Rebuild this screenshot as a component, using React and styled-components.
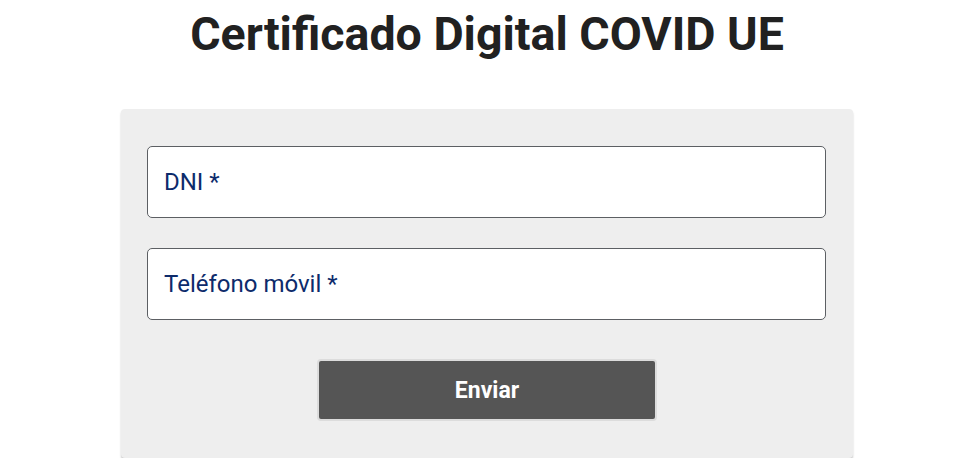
import React from "react";
import styled, { createGlobalStyle } from "styled-components";

const Global = createGlobalStyle`
  html, body { margin: 0; padding: 0; background: #fff; }
  body { font-family: Roboto, "Liberation Sans", sans-serif; }
`;

const Page = styled.div`
  width: 980px;
  display: flex;
  flex-direction: column;
  align-items: center;
  padding-right: 6px;
  box-sizing: border-box;
`;

const Title = styled.h1`
  margin: 7px 0 0;
  font-size: 46.5px;
  line-height: 54px;
  font-weight: 700;
  color: #212121;
`;

const Card = styled.form`
  margin-top: 48px;
  width: 732px;
  box-sizing: border-box;
  background: #eeeeee;
  border-radius: 4px;
  box-shadow: 0 2px 2px rgba(0, 0, 0, 0.22);
  padding: 37px 27px 37px 26px;
  display: flex;
  flex-direction: column;
  gap: 30px;
`;

const Field = styled.label`
  display: flex;
  align-items: center;
  height: 72px;
  box-sizing: border-box;
  background: #fff;
  border: 1px solid #5c5f63;
  border-radius: 5px;
  padding: 0 16px;
  font-size: 24px;
  color: #0d2b6b;
`;

const Actions = styled.div`
  display: flex;
  justify-content: center;
  margin-top: 9px;
  padding-left: 1px;
`;

const Button = styled.button`
  width: 340px;
  height: 62px;
  box-sizing: border-box;
  background: #555555;
  color: #fff;
  border: 2px solid #dcdcdc;
  border-radius: 4px;
  font-family: Roboto, "Liberation Sans", sans-serif;
  font-size: 23px;
  font-weight: 700;
  cursor: pointer;
`;

export default function App() {
  return (
    <>
      <Global />
      <Page>
        <Title>Certificado Digital COVID UE</Title>
        <Card onSubmit={(e) => e.preventDefault()}>
          <Field>DNI *</Field>
          <Field>Teléfono móvil *</Field>
          <Actions>
            <Button type="submit">Enviar</Button>
          </Actions>
        </Card>
      </Page>
    </>
  );
}
